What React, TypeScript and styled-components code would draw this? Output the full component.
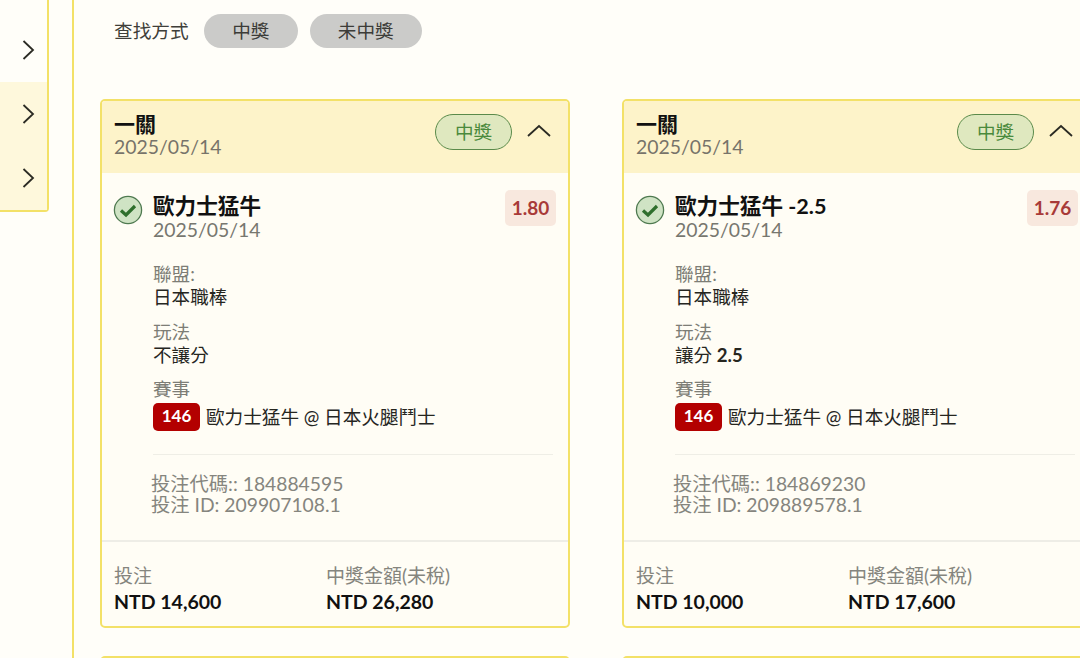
import styled, { createGlobalStyle } from "styled-components";

const GlobalStyle = createGlobalStyle`
  html, body {
    margin: 0;
    padding: 0;
    height: 100%;
    overflow: hidden;
    background: #fffef9;
    font-family: Lato, "Noto Sans CJK TC", sans-serif;
  }
`;

type Bet = {
  team: string;
  handicap?: string;
  odds: string;
  play: string;
  playValue?: string;
  code: string;
  id: string;
  stake: string;
  prize: string;
};

const bets: Bet[] = [
  {
    team: "歐力士猛牛",
    odds: "1.80",
    play: "不讓分",
    code: "184884595",
    id: "209907108.1",
    stake: "NTD 14,600",
    prize: "NTD 26,280",
  },
  {
    team: "歐力士猛牛",
    handicap: " -2.5",
    odds: "1.76",
    play: "讓分",
    playValue: " 2.5",
    code: "184869230",
    id: "209889578.1",
    stake: "NTD 10,000",
    prize: "NTD 17,600",
  },
];

function Chevron({ up }: { up?: boolean }) {
  return (
    <svg width="24" height="24" viewBox="0 0 24 24" fill="none" stroke="#2b2b24" strokeWidth="1.8">
      {up ? <path d="M1 16 L12 6 L23 16" /> : <path d="M7.5 3 L17 12 L7.5 21" />}
    </svg>
  );
}

function CheckIcon() {
  return (
    <svg width="30" height="30" viewBox="0 0 30 30">
      <circle cx="15" cy="15" r="13.6" fill="#cfe3c4" stroke="#4f7a50" strokeWidth="1.3" />
      <path d="M8 15.5 L13 20 L22 11" fill="none" stroke="#2e6f2c" strokeWidth="3.2" />
    </svg>
  );
}

function BetCard({ bet }: { bet: Bet }) {
  return (
    <Card>
      <CardHeader>
        <HeaderTitle>
          <Parlay>一關</Parlay>
          <HeaderDate>2025/05/14</HeaderDate>
        </HeaderTitle>
        <WinPill>中獎</WinPill>
        <Chevron up />
      </CardHeader>
      <CardBody>
        <Selection>
          <CheckIcon />
          <SelectionText>
            <TeamName>
              {bet.team}
              {bet.handicap}
            </TeamName>
            <SelectionDate>2025/05/14</SelectionDate>
          </SelectionText>
          <Odds>{bet.odds}</Odds>
        </Selection>
        <Details>
          <Field>
            <FieldLabel>聯盟:</FieldLabel>
            <FieldValue>日本職棒</FieldValue>
          </Field>
          <Field>
            <FieldLabel>玩法</FieldLabel>
            <FieldValue>
              {bet.play}
              {bet.playValue && <strong>{bet.playValue}</strong>}
            </FieldValue>
          </Field>
          <Field>
            <FieldLabel>賽事</FieldLabel>
            <MatchRow>
              <MatchBadge>146</MatchBadge>
              <FieldValue>歐力士猛牛 @ 日本火腿鬥士</FieldValue>
            </MatchRow>
          </Field>
        </Details>
        <Codes>
          <CodeLine>投注代碼:: {bet.code}</CodeLine>
          <CodeLine>投注 ID: {bet.id}</CodeLine>
        </Codes>
      </CardBody>
      <CardFooter>
        <Amount>
          <AmountLabel>投注</AmountLabel>
          <AmountValue>{bet.stake}</AmountValue>
        </Amount>
        <Amount>
          <AmountLabel>中獎金額(未稅)</AmountLabel>
          <AmountValue>{bet.prize}</AmountValue>
        </Amount>
      </CardFooter>
    </Card>
  );
}

export default function App() {
  return (
    <Page>
      <GlobalStyle />
      <Sidebar>
        <SideRow $height={80}>
          <Chevron />
        </SideRow>
        <SideRow $height={64} $active>
          <Chevron />
        </SideRow>
        <SideRow $height={64} $active>
          <Chevron />
        </SideRow>
      </Sidebar>
      <Main>
        <FilterBar>
          <FilterLabel>查找方式</FilterLabel>
          <FilterButton $width={94}>中獎</FilterButton>
          <FilterButton $width={112}>未中獎</FilterButton>
        </FilterBar>
        <CardGrid>
          {bets.map((bet) => (
            <BetCard key={bet.code} bet={bet} />
          ))}
          <NextCard />
          <NextCard />
        </CardGrid>
      </Main>
    </Page>
  );
}

const Page = styled.div`
  display: flex;
  align-items: flex-start;
  width: 1080px;
  height: 658px;
  overflow: hidden;
  background: #fffef9;
`;

const Sidebar = styled.aside`
  flex: none;
  box-sizing: border-box;
  width: 49px;
  margin-right: 23px;
  border-right: 2px solid #f3e168;
  border-bottom: 2px solid #f3e168;
  border-bottom-right-radius: 4px;
`;

const SideRow = styled.div<{ $height: number; $active?: boolean }>`
  display: flex;
  align-items: center;
  justify-content: flex-end;
  box-sizing: border-box;
  height: ${({ $height }) => $height}px;
  padding: ${({ $active }) => ($active ? "0" : "16px")} 7px 0 0;
  margin-top: ${({ $active }) => ($active ? "0" : "2px")};
  background: ${({ $active }) => ($active ? "#fef8dc" : "#fffef9")};
`;

const Main = styled.main`
  flex: none;
  box-sizing: border-box;
  width: 1008px;
  height: 658px;
  padding: 14px 0 0 26px;
  border-left: 2px solid #f3e168;
`;

const FilterBar = styled.div`
  display: flex;
  align-items: center;
  gap: 12px;
  height: 34px;
  padding-left: 14px;
`;

const FilterLabel = styled.span`
  margin: -3px 3px 0 0;
  font-size: 18.7px;
  color: #3f3f3a;
`;

const FilterButton = styled.span<{ $width: number }>`
  width: ${({ $width }) => $width}px;
  height: 34px;
  line-height: 34px;
  text-align: center;
  font-size: 18.6px;
  color: #3c3c38;
  background: #cbcbc9;
  border-radius: 17px;
`;

const CardGrid = styled.div`
  display: grid;
  grid-template-columns: 470px 470px;
  column-gap: 52px;
  row-gap: 28px;
  margin-top: 51px;
`;

const Card = styled.article`
  display: flex;
  flex-direction: column;
  box-sizing: border-box;
  height: 529px;
  background: #fffdf5;
  border: 2px solid #f3e168;
  border-radius: 5px;
  overflow: hidden;
`;

const NextCard = styled(Card)`
  height: 40px;
`;

const CardHeader = styled.header`
  display: flex;
  align-items: center;
  box-sizing: border-box;
  height: 72px;
  padding: 0 17px 10px 12px;
  background: #fdf3c9;
`;

const HeaderTitle = styled.div`
  flex: 1;
  align-self: flex-start;
  padding-top: 12px;
`;

const Parlay = styled.div`
  font-size: 21px;
  line-height: 22px;
  font-weight: 700;
  color: #111;
`;

const HeaderDate = styled.div`
  margin-top: 1px;
  font-size: 19.4px;
  line-height: 22px;
  color: #77736a;
`;

const WinPill = styled.span`
  box-sizing: border-box;
  width: 77px;
  height: 36px;
  margin-right: 15px;
  line-height: 34px;
  text-align: center;
  font-size: 18.6px;
  color: #4a8a3c;
  background: #dfe8bf;
  border: 1px solid #5a8a4a;
  border-radius: 18px;
`;

const CardBody = styled.div`
  flex: 1;
  padding: 17px 0 0 12px;
`;

const Selection = styled.div`
  display: flex;
  align-items: flex-start;
  gap: 9px;
  padding-right: 12px;

  svg {
    flex: none;
    margin: 5px 1px 0 -1px;
  }
`;

const SelectionText = styled.div`
  flex: 1;
`;

const TeamName = styled.div`
  font-size: 21.6px;
  line-height: 32px;
  font-weight: 700;
  color: #111;
`;

const SelectionDate = styled.div`
  margin-top: -3px;
  font-size: 19.4px;
  line-height: 22px;
  color: #77776f;
`;

const Odds = styled.span`
  width: 51px;
  height: 36px;
  line-height: 36px;
  text-align: center;
  font-size: 19px;
  font-weight: 700;
  color: #a83a38;
  background: #f8e8de;
  border-radius: 5px;
`;

const Details = styled.div`
  display: flex;
  flex-direction: column;
  gap: 11.5px;
  margin: 22px 0 0 39px;
  padding-bottom: 23px;
`;

const Field = styled.div`
  display: flex;
  flex-direction: column;
`;

const FieldLabel = styled.span`
  font-size: 18.6px;
  line-height: 23px;
  color: #7d7d76;
`;

const FieldValue = styled.span`
  font-size: 18.6px;
  line-height: 23px;
  color: #26261f;
`;

const MatchRow = styled.div`
  display: flex;
  align-items: center;
  gap: 6px;
  height: 28px;
  margin-top: 2px;
`;

const MatchBadge = styled.span`
  width: 47px;
  height: 28px;
  line-height: 26px;
  text-align: center;
  font-size: 17px;
  font-weight: 700;
  color: #fff;
  background: #b30000;
  border-radius: 5px;
`;

const Codes = styled.div`
  width: 400px;
  margin-left: 39px;
  padding-top: 18px;
  border-top: 1px solid #efeee6;
`;

const CodeLine = styled.div`
  margin-left: -2px;
  font-size: 19.3px;
  line-height: 21px;
  color: #85857e;
`;

const CardFooter = styled.footer`
  display: grid;
  grid-template-columns: 212px 1fr;
  box-sizing: border-box;
  height: 86px;
  padding: 21px 12px 0;
  border-top: 2px solid #eeede6;
`;

const Amount = styled.div`
  display: flex;
  flex-direction: column;
`;

const AmountLabel = styled.span`
  font-size: 19px;
  line-height: 26px;
  color: #85857e;
`;

const AmountValue = styled.span`
  font-size: 19.5px;
  line-height: 26px;
  font-weight: 700;
  color: #111;
`;
